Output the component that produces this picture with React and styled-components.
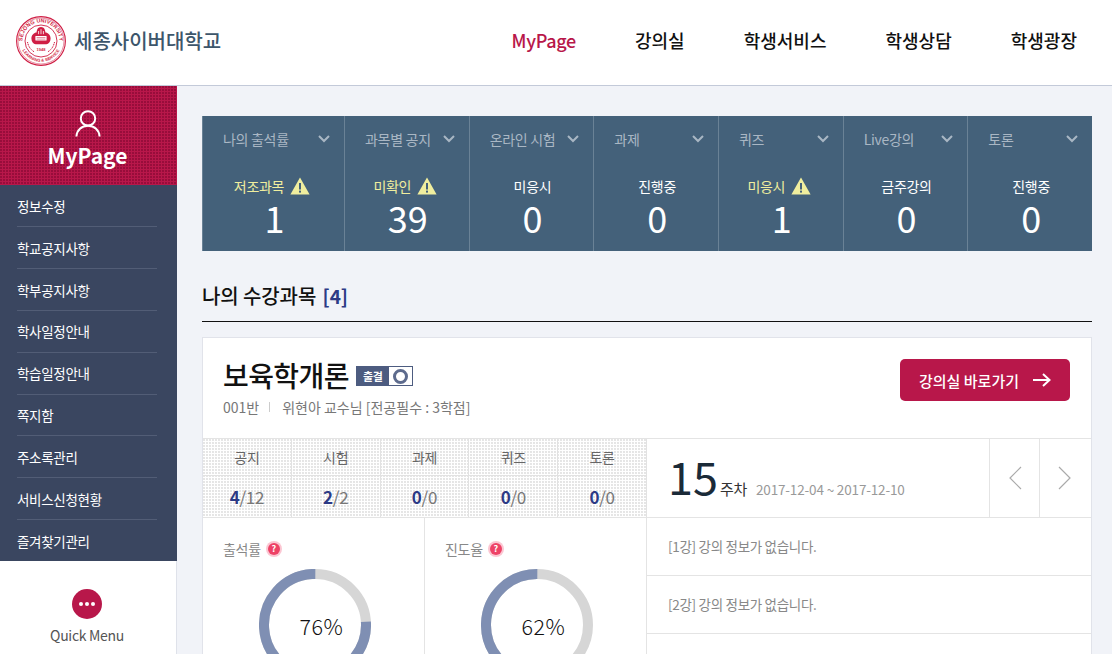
import React from 'react';
import styled, { createGlobalStyle } from 'styled-components';

const navItems = ['MyPage', '강의실', '학생서비스', '학생상담', '학생광장'];
const sideItems = ['정보수정', '학교공지사항', '학부공지사항', '학사일정안내', '학습일정안내', '쪽지함', '주소록관리', '서비스신청현황', '즐겨찾기관리'];
const stats = [
    { title: '나의 출석률', label: '저조과목', value: '1', warn: true },
    { title: '과목별 공지', label: '미확인', value: '39', warn: true },
    { title: '온라인 시험', label: '미응시', value: '0' },
    { title: '과제', label: '진행중', value: '0' },
    { title: '퀴즈', label: '미응시', value: '1', warn: true },
    { title: 'Live강의', label: '금주강의', value: '0' },
    { title: '토론', label: '진행중', value: '0' },
];
const counts = [
    { name: '공지', done: 4, total: 12 },
    { name: '시험', done: 2, total: 2 },
    { name: '과제', done: 0, total: 0 },
    { name: '퀴즈', done: 0, total: 0 },
    { name: '토론', done: 0, total: 0 },
];

const Warning = () => (
    <svg width="20" height="18" viewBox="0 0 20 18">
        <path d="M10 0.5 L19.6 17.5 H0.4 Z" fill="#f0ee9e" />
        <rect x="9" y="6" width="2" height="6.5" fill="#44617a" />
        <rect x="9" y="13.6" width="2" height="2" fill="#44617a" />
    </svg>
);

const Chevron = () => (
    <svg width="12" height="8" viewBox="0 0 12 8">
        <path d="M1 1 L6 6 L11 1" fill="none" stroke="#a9b7c4" strokeWidth="2" />
    </svg>
);

const Donut = ({ percent }) => {
    const c = 2 * Math.PI * 51;
    const len = (c * percent) / 100;
    return (
        <DonutBox>
            <svg width="112" height="112" viewBox="0 0 112 112">
                <circle cx="56" cy="56" r="51" fill="none" stroke="#d6d6d6" strokeWidth="10" />
                <circle
                    cx="56"
                    cy="56"
                    r="51"
                    fill="none"
                    stroke="#7f8fb3"
                    strokeWidth="10"
                    strokeDasharray={`${len} ${c}`}
                    transform={`rotate(${-90 - (percent * 360) / 100} 56 56)`}
                />
            </svg>
            <DonutText>{percent}%</DonutText>
        </DonutBox>
    );
};

const Logo = () => (
    <svg width="50" height="50" viewBox="0 0 50 50">
        <defs>
            <path id="sealTop" d="M6.4 25 A18.6 18.6 0 0 1 43.6 25" />
            <path id="sealBottom" d="M4.2 25 A20.8 20.8 0 0 0 45.8 25" />
        </defs>
        <circle cx="25" cy="25" r="24.4" fill="none" stroke="#cf1f45" strokeWidth="1.1" />
        <circle cx="25" cy="25" r="23" fill="none" stroke="#cf1f45" strokeWidth="0.5" />
        <circle cx="25" cy="25" r="16" fill="none" stroke="#cf1f45" strokeWidth="0.9" />
        <text fontSize="5.4" fontWeight="700" fill="#cf1f45" fontFamily="Liberation Sans, sans-serif" textAnchor="middle" letterSpacing="0.1">
            <textPath href="#sealTop" startOffset="50%">SEJONG UNIVERSITY</textPath>
        </text>
        <text fontSize="4.2" fontWeight="700" fill="#cf1f45" fontFamily="Liberation Sans, sans-serif" textAnchor="middle" letterSpacing="0">
            <textPath href="#sealBottom" startOffset="50%">LEARNING &amp; SERVICE</textPath>
        </text>
        <path
            d="M25 11 C21.8 11 20.6 14 20.6 16.6 C18.2 16.6 15.4 19.2 15.4 22.4 C15.4 25.6 17.4 27.8 19.6 28.2 L30.4 28.2 C32.6 27.8 34.6 25.6 34.6 22.4 C34.6 19.2 31.8 16.6 29.4 16.6 C29.4 14 28.2 11 25 11 Z"
            fill="#cf1f45"
        />
        <path d="M25 13.2 V18.2 M22.6 15 V18.2 M27.4 15 V18.2" stroke="#fff" strokeWidth="0.8" fill="none" />
        <rect x="19.4" y="20" width="11.2" height="4.6" rx="0.6" fill="#fff" />
        <path d="M20.6 21.5 H29.4 M20.6 23.1 H29.4" stroke="#cf1f45" strokeWidth="0.5" />
        <text x="25" y="35" fontSize="4" fontWeight="700" fill="#cf1f45" fontFamily="Liberation Sans, sans-serif" textAnchor="middle" letterSpacing="0">1948</text>
        <path d="M11.5 26 C12.5 31 15 34 18.5 36 M38.5 26 C37.5 31 35 34 31.5 36" stroke="#cf1f45" strokeWidth="1" fill="none" strokeDasharray="1.2 0.6" />
    </svg>
);

const App = () => (
    <Page>
        <GlobalStyle />
        <Header>
            <Brand>
                <Logo />
                <BrandName>세종사이버대학교</BrandName>
            </Brand>
            <TopNav>
                {navItems.map((item, index) => (
                    <TopNavItem key={item} $active={index === 0}>{item}</TopNavItem>
                ))}
            </TopNav>
        </Header>
        <Content>
            <Sidebar>
                <SideTitle>
                    <svg width="26" height="27" viewBox="0 0 26 27">
                        <circle cx="13" cy="8.4" r="7.2" fill="none" stroke="#fff" strokeWidth="2" />
                        <path d="M1.4 26.5 C1.8 20 6.6 15.8 13 15.8 C19.4 15.8 24.2 20 24.6 26.5" fill="none" stroke="#fff" strokeWidth="2" />
                    </svg>
                    <SideTitleText>MyPage</SideTitleText>
                </SideTitle>
                <SideNav>
                    {sideItems.map((item) => (
                        <SideNavItem key={item}>{item}</SideNavItem>
                    ))}
                </SideNav>
                <QuickMenu>
                    <QuickDot>
                        <i /><i /><i />
                    </QuickDot>
                    <QuickLabel>Quick Menu</QuickLabel>
                </QuickMenu>
            </Sidebar>
            <Main>
                <StatBar>
                    {stats.map((stat) => (
                        <StatCell key={stat.title}>
                            <StatTitle>
                                <span>{stat.title}</span>
                                <Chevron />
                            </StatTitle>
                            <StatLabel $warn={stat.warn}>
                                {stat.label}
                                {stat.warn && <Warning />}
                            </StatLabel>
                            <StatValue>{stat.value}</StatValue>
                        </StatCell>
                    ))}
                </StatBar>
                <SectionTitle>나의 수강과목 <b>[4]</b></SectionTitle>
                <Card>
                    <CardHead>
                        <div>
                            <CourseLine>
                                <CourseName>보육학개론</CourseName>
                                <Badge>
                                    <BadgeLabel>출결</BadgeLabel>
                                    <BadgeMark />
                                </Badge>
                            </CourseLine>
                            <CourseMeta>
                                001반<MetaBar />위현아 교수님 [전공필수 : 3학점]
                            </CourseMeta>
                        </div>
                        <EnterButton>
                            강의실 바로가기
                            <svg width="18" height="14" viewBox="0 0 18 14">
                                <path d="M0 7 H16 M10 1 L16.5 7 L10 13" fill="none" stroke="#fff" strokeWidth="2" />
                            </svg>
                        </EnterButton>
                    </CardHead>
                    <Split>
                        <CountTable>
                            {counts.map((count) => (
                                <CountHead key={count.name}>{count.name}</CountHead>
                            ))}
                            {counts.map((count) => (
                                <CountValue key={count.name}>
                                    <b>{count.done}</b>/{count.total}
                                </CountValue>
                            ))}
                        </CountTable>
                        <WeekBar>
                            <WeekInfo>
                                <WeekNumber>15</WeekNumber>
                                <WeekUnit>주차</WeekUnit>
                                <WeekDate>2017-12-04 ~ 2017-12-10</WeekDate>
                            </WeekInfo>
                            <WeekButton>
                                <svg width="14" height="24" viewBox="0 0 14 24">
                                    <path d="M13 1 L2 12 L13 23" fill="none" stroke="#aaa" strokeWidth="1.2" />
                                </svg>
                            </WeekButton>
                            <WeekButton>
                                <svg width="14" height="24" viewBox="0 0 14 24">
                                    <path d="M1 1 L12 12 L1 23" fill="none" stroke="#aaa" strokeWidth="1.2" />
                                </svg>
                            </WeekButton>
                        </WeekBar>
                    </Split>
                    <Split>
                        <Rates>
                            <RatePanel>
                                <RateTitle>출석률<Help>?</Help></RateTitle>
                                <Donut percent={76} />
                            </RatePanel>
                            <RatePanel>
                                <RateTitle>진도율<Help>?</Help></RateTitle>
                                <Donut percent={62} />
                            </RatePanel>
                        </Rates>
                        <Lectures>
                            <LectureRow>[1강] 강의 정보가 없습니다.</LectureRow>
                            <LectureRow>[2강] 강의 정보가 없습니다.</LectureRow>
                        </Lectures>
                    </Split>
                </Card>
            </Main>
        </Content>
    </Page>
);

export default App;

const GlobalStyle = createGlobalStyle`
    html, body {
        margin: 0;
        height: 654px;
        overflow: hidden;
        background: #f1f3f8;
    }
    * {
        box-sizing: border-box;
    }
`;

const Page = styled.div`
    height: 654px;
    display: flex;
    flex-direction: column;
    overflow: hidden;
    font-family: "Noto Sans CJK KR", "Noto Sans", sans-serif;
    letter-spacing: -0.3px;
`;

const Header = styled.header`
    flex: 0 0 86px;
    display: flex;
    align-items: center;
    justify-content: space-between;
    padding: 0 35px 0 16px;
    background: #fff;
    border-bottom: 1px solid #c3cad9;
`;

const Brand = styled.div`
    display: flex;
    align-items: center;
    gap: 8px;
    margin-top: -4px;
`;

const BrandName = styled.div`
    font-size: 20px;
    font-weight: 500;
    color: #3d566b;
    letter-spacing: 0;
`;

const TopNav = styled.nav`
    display: flex;
    gap: 59px;
    margin-top: -6px;
`;

const TopNavItem = styled.a`
    font-size: 18px;
    font-weight: 500;
    letter-spacing: ${(props) => (props.$active ? '-0.3px' : '0')};
    color: ${(props) => (props.$active ? '#b8174a' : '#111')};
`;

const Content = styled.div`
    flex: 1;
    display: flex;
    min-height: 0;
`;

const Sidebar = styled.aside`
    flex: 0 0 177px;
    display: flex;
    flex-direction: column;
    background: #fff;
    border-right: 1px solid #dfe2ea;
`;

const SideTitle = styled.div`
    flex: 0 0 99px;
    margin-right: -1px;
    padding: 24px 2px 0 0;
    display: flex;
    flex-direction: column;
    align-items: center;
    color: #fff;
    background-color: #b8174a;
    background-image: radial-gradient(circle at 1px 1px, #980d3b 0.9px, transparent 1px);
    background-size: 3px 3px;
`;

const SideTitleText = styled.div`
    font-size: 21px;
    font-weight: 700;
    line-height: 30px;
    letter-spacing: 0;
    margin-top: 3px;
`;

const SideNav = styled.ul`
    flex: 0 0 376px;
    margin: 0 -1px 0 0;
    padding: 0.5px 20px 0 17px;
    list-style: none;
    display: flex;
    flex-direction: column;
    background: #3a4660;
`;

const SideNavItem = styled.li`
    flex: 1;
    display: flex;
    align-items: center;
    font-size: 13.5px;
    color: #fff;
    border-bottom: 1px solid #525d76;
    &:last-child {
        border-bottom: 0;
    }
`;

const QuickMenu = styled.div`
    flex: 1;
    display: flex;
    flex-direction: column;
    align-items: center;
    padding: 28px 2px 0 0;
`;

const QuickDot = styled.div`
    width: 30px;
    height: 30px;
    border-radius: 50%;
    background: #b8174a;
    display: flex;
    align-items: center;
    justify-content: center;
    gap: 2px;
    i {
        width: 4px;
        height: 4px;
        border-radius: 50%;
        background: #fff;
    }
`;

const QuickLabel = styled.div`
    font-size: 14px;
    line-height: 20px;
    margin-top: 6px;
    color: #555;
    letter-spacing: -0.3px;
`;

const Main = styled.main`
    flex: 1;
    padding: 30px 20px 0 25px;
    min-width: 0;
`;

const StatBar = styled.div`
    height: 135px;
    display: grid;
    grid-template-columns: 142px repeat(6, 1fr);
    background: #44617a;
`;

const StatCell = styled.div`
    display: flex;
    flex-direction: column;
    align-items: center;
    padding: 13px 0 0 2px;
    border-left: 1px solid #6a8296;
`;

const StatTitle = styled.div`
    align-self: stretch;
    display: flex;
    align-items: center;
    justify-content: space-between;
    padding: 0 14px 0 18px;
    font-size: 14px;
    line-height: 20px;
    color: #aab7c4;
`;

const StatLabel = styled.div`
    display: flex;
    align-items: center;
    gap: 6px;
    margin: 27px ${(props) => (props.$warn ? '5px' : '0')} 0 0;
    font-size: 14px;
    line-height: 20px;
    color: ${(props) => (props.$warn ? '#f0ee9e' : '#fff')};
`;

const StatValue = styled.div`
    font-size: 36px;
    line-height: 44px;
    margin-top: -1px;
    color: #fff;
    letter-spacing: 0;
`;

const SectionTitle = styled.h2`
    margin: 0;
    height: 71px;
    padding-top: 31px;
    font-size: 20px;
    line-height: 28px;
    font-weight: 500;
    color: #111;
    letter-spacing: -0.1px;
    border-bottom: 1px solid #111;
    b {
        margin-left: 2px;
        font-size: 19px;
        color: #2c3a85;
        font-weight: 700;
    }
`;

const Card = styled.section`
    margin-top: 15px;
    background: #fff;
    border: 1px solid #e1e3ea;
`;

const CardHead = styled.div`
    height: 100px;
    display: flex;
    align-items: flex-start;
    justify-content: space-between;
    padding: 16px 21px 0 20px;
`;

const CourseLine = styled.div`
    display: flex;
    align-items: center;
    gap: 7px;
`;

const CourseName = styled.div`
    font-size: 28px;
    line-height: 42px;
    font-weight: 500;
    color: #111;
    letter-spacing: -0.6px;
`;

const Badge = styled.div`
    display: flex;
    width: 57px;
    height: 20px;
    border: 1px solid #4d5c80;
    margin-top: 2px;
`;

const BadgeLabel = styled.span`
    flex: 0 0 32px;
    display: flex;
    align-items: center;
    justify-content: center;
    font-size: 11px;
    font-weight: 700;
    color: #fff;
    background: #4d5c80;
`;

const BadgeMark = styled.span`
    flex: 1;
    display: flex;
    align-items: center;
    justify-content: center;
    &::after {
        content: '';
        width: 9px;
        height: 9px;
        border-radius: 50%;
        border: 3px solid #5d6b8d;
    }
`;

const CourseMeta = styled.div`
    display: flex;
    align-items: center;
    font-size: 14px;
    line-height: 20px;
    margin-top: 1px;
    color: #777;
    letter-spacing: 0;
`;

const MetaBar = styled.i`
    width: 1px;
    height: 10px;
    margin: 0 12px 0 10px;
    background: #ccc;
`;

const EnterButton = styled.button`
    width: 170px;
    height: 42px;
    margin-top: 5px;
    display: flex;
    align-items: center;
    justify-content: center;
    gap: 14px;
    padding: 0;
    border: 0;
    border-radius: 5px;
    font-family: inherit;
    font-size: 15px;
    font-weight: 500;
    letter-spacing: 0;
    color: #fff;
    background: #b8174a;
`;

const Split = styled.div`
    display: grid;
    grid-template-columns: 444px 1fr;
`;

const CountTable = styled.div`
    height: 80px;
    display: grid;
    grid-template-columns: repeat(5, 1fr);
    grid-template-rows: 37px 41px;
    border-top: 1px solid #e4e4e4;
    border-bottom: 1px solid #e4e4e4;
    background-color: #fff;
    background-image: radial-gradient(circle at 1px 1px, #e4e4e4 0.7px, transparent 0.8px);
    background-size: 3px 3px;
`;

const CountHead = styled.div`
    display: flex;
    align-items: center;
    justify-content: center;
    font-size: 14px;
    color: #666;
    border-right: 1px solid #e2e2e2;
    border-bottom: 1px solid #e2e2e2;
`;

const CountValue = styled.div`
    display: flex;
    align-items: center;
    justify-content: center;
    font-size: 17px;
    color: #777;
    border-right: 1px solid #e2e2e2;
    b {
        color: #2c3a85;
        font-weight: 700;
    }
`;

const WeekBar = styled.div`
    height: 80px;
    display: flex;
    padding-right: 2px;
    border-top: 1px solid #e4e4e4;
    border-bottom: 1px solid #e4e4e4;
`;

const WeekInfo = styled.div`
    flex: 1;
    display: flex;
    align-items: baseline;
    padding-left: 21px;
    line-height: 74px;
`;

const WeekNumber = styled.span`
    font-size: 45px;
    color: #1a2a38;
    letter-spacing: 0;
`;

const WeekUnit = styled.span`
    margin-left: 2px;
    font-size: 15px;
    color: #333;
`;

const WeekDate = styled.span`
    margin-left: 9px;
    font-size: 13.5px;
    color: #999;
    letter-spacing: -0.15px;
`;

const WeekButton = styled.div`
    flex: 0 0 50px;
    display: flex;
    align-items: center;
    justify-content: center;
    border-left: 1px solid #e4e4e4;
`;

const Rates = styled.div`
    display: grid;
    grid-template-columns: 222px 1fr;
    border-right: 1px solid #e4e4e4;
`;

const RatePanel = styled.div`
    height: 140px;
    padding: 21px 0 0 20px;
    border-right: 1px solid #e4e4e4;
    &:last-child {
        border-right: 0;
    }
`;

const RateTitle = styled.div`
    display: flex;
    align-items: center;
    gap: 7px;
    font-size: 14px;
    line-height: 20px;
    color: #888;
`;

const Help = styled.span`
    width: 12px;
    height: 12px;
    border-radius: 50%;
    display: flex;
    align-items: center;
    justify-content: center;
    font-size: 9px;
    font-weight: 700;
    color: #fff;
    background: #ee4266;
    box-shadow: 0 0 0 2px #fbc6d2;
    letter-spacing: 0;
`;

const DonutBox = styled.div`
    position: relative;
    width: 112px;
    height: 112px;
    margin: 10px 0 0 36px;
`;

const DonutText = styled.div`
    position: absolute;
    top: 42px;
    left: 0;
    width: 100%;
    padding-left: 13px;
    text-align: center;
    font-size: 21.5px;
    line-height: 30px;
    font-weight: 300;
    color: #111;
    letter-spacing: 0.5px;
`;

const Lectures = styled.div`
    display: flex;
    flex-direction: column;
`;

const LectureRow = styled.div`
    height: 58px;
    display: flex;
    align-items: center;
    padding: 0 0 2px 21px;
    font-size: 13.5px;
    color: #888;
    border-bottom: 1px solid #e4e4e4;
`;
